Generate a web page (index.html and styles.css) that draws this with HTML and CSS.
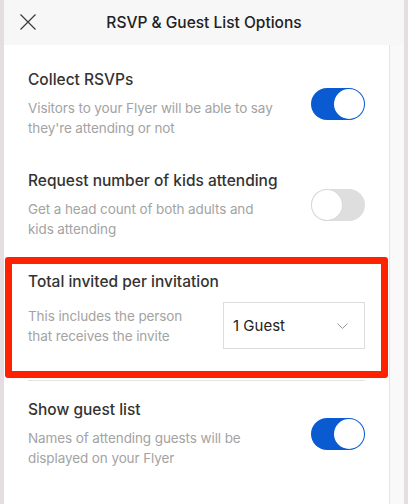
FILE: index.html
```html
<!DOCTYPE html>
<html>
<head>
<meta charset="utf-8">
<link rel="stylesheet" href="styles.css">
</head>
<body>
<div class="frame">
  <div class="edge"></div>
  <div class="dialog">
    <header class="header">
      <button class="close" aria-label="Close">
        <svg width="16" height="16" viewBox="0 0 16 16"><path d="M0.5 0.5 L15.5 15.5 M15.5 0.5 L0.5 15.5" stroke="#3a3a3a" stroke-width="1.2" fill="none"/></svg>
      </button>
      <h1 class="title">RSVP &amp; Guest List Options</h1>
    </header>
    <div class="content">
      <div class="panel">
        <section class="option">
          <div class="text">
            <h2 class="opt-title">Collect RSVPs</h2>
            <p class="opt-desc">Visitors to your Flyer will be able to say they're attending or not</p>
          </div>
          <span class="toggle on"><span class="knob"></span></span>
        </section>
        <section class="option">
          <div class="text">
            <h2 class="opt-title">Request number of kids attending</h2>
            <p class="opt-desc">Get a head count of both adults and kids attending</p>
          </div>
          <span class="toggle"><span class="knob"></span></span>
        </section>
        <section class="option invited">
          <h2 class="opt-title">Total invited per invitation</h2>
          <div class="row">
            <p class="opt-desc narrow">This includes the person that receives the invite</p>
            <div class="select">
              <span>1 Guest</span>
              <svg width="11" height="6" viewBox="0 0 11 6"><path d="M0.5 0.5 L5.5 5.5 L10.5 0.5" stroke="#9a9a9a" stroke-width="1" fill="none"/></svg>
            </div>
          </div>
          <div class="highlight"></div>
        </section>
        <section class="option last">
          <div class="text">
            <h2 class="opt-title">Show guest list</h2>
            <p class="opt-desc">Names of attending guests will be displayed on your Flyer</p>
          </div>
          <span class="toggle on"><span class="knob"></span></span>
        </section>
      </div>
      <div class="scrollbar"></div>
    </div>
  </div>
  <div class="edge"></div>
</div>
</body>
</html>
```

FILE: styles.css
```css
* { box-sizing: border-box; }
html, body { margin: 0; padding: 0; }
body {
  width: 408px;
  height: 504px;
  overflow: hidden;
  font-family: Inter, "Liberation Sans", sans-serif;
  background: #fff;
}
.frame {
  display: flex;
  height: 504px;
}
.edge {
  width: 4px;
  background: #e6dde2;
  flex: none;
}
.dialog {
  flex: 1;
  display: flex;
  flex-direction: column;
  background: #f7f7f7;
}
.header {
  height: 45px;
  flex: none;
  display: flex;
  align-items: center;
  justify-content: center;
  position: relative;
}
.close {
  position: absolute;
  left: 16px;
  top: 14px;
  width: 16px;
  height: 16px;
  padding: 0;
  border: 0;
  background: none;
  display: block;
}
.close svg { display: block; }
.title {
  margin: 0;
  font-size: 15.5px;
  font-weight: 500;
  color: #222;
  line-height: 20px;
  padding-top: 1px;
}
.content {
  flex: 1;
  display: flex;
}
.panel {
  width: 385px;
  background: #fff;
  padding: 8px 24px 0;
}
.scrollbar {
  flex: 1;
  background: #f9f9f9;
  border-left: 1px solid #e6e6e6;
}
.option {
  display: flex;
  align-items: center;
  padding: 17px 0 16px;
  position: relative;
}
.text { flex: 1; }
.opt-title {
  margin: 0 0 8px;
  font-size: 15.5px;
  font-weight: 500;
  line-height: 20px;
  color: #333;
}
.opt-desc {
  margin: 0;
  font-size: 13.5px;
  letter-spacing: -0.1px;
  line-height: 20px;
  color: #a3a3a3;
  width: 248px;
}
.opt-desc.narrow { width: 172px; }
.toggle {
  flex: none;
  width: 54px;
  height: 32px;
  border-radius: 16px;
  background: #dedede;
  position: relative;
}
.toggle .knob {
  position: absolute;
  top: 1px;
  left: 1px;
  width: 30px;
  height: 30px;
  border-radius: 50%;
  background: #fff;
  box-shadow: 0 0 0 1px #d9d9d9;
}
.toggle.on { background: #0a5bd1; }
.toggle.on .knob {
  left: auto;
  right: 1px;
  box-shadow: none;
}
.invited {
  flex-direction: column;
  align-items: stretch;
  padding-bottom: 31px;
  border-bottom: 1px solid #e2e2e2;
}
.invited .opt-title { margin-bottom: 10px; }
.row {
  display: flex;
  align-items: center;
  justify-content: space-between;
}
.select {
  width: 142px;
  height: 47px;
  border: 1px solid #dcdcdc;
  display: flex;
  align-items: center;
  justify-content: space-between;
  padding: 0 16px 0 9px;
  font-size: 15px;
  color: #222;
}
.highlight {
  position: absolute;
  top: 2px;
  left: -23px;
  right: -23px;
  bottom: 2px;
  border: 7px solid #ff2200;
  border-radius: 3px;
  pointer-events: none;
}
.last { padding-top: 19px; }
```
